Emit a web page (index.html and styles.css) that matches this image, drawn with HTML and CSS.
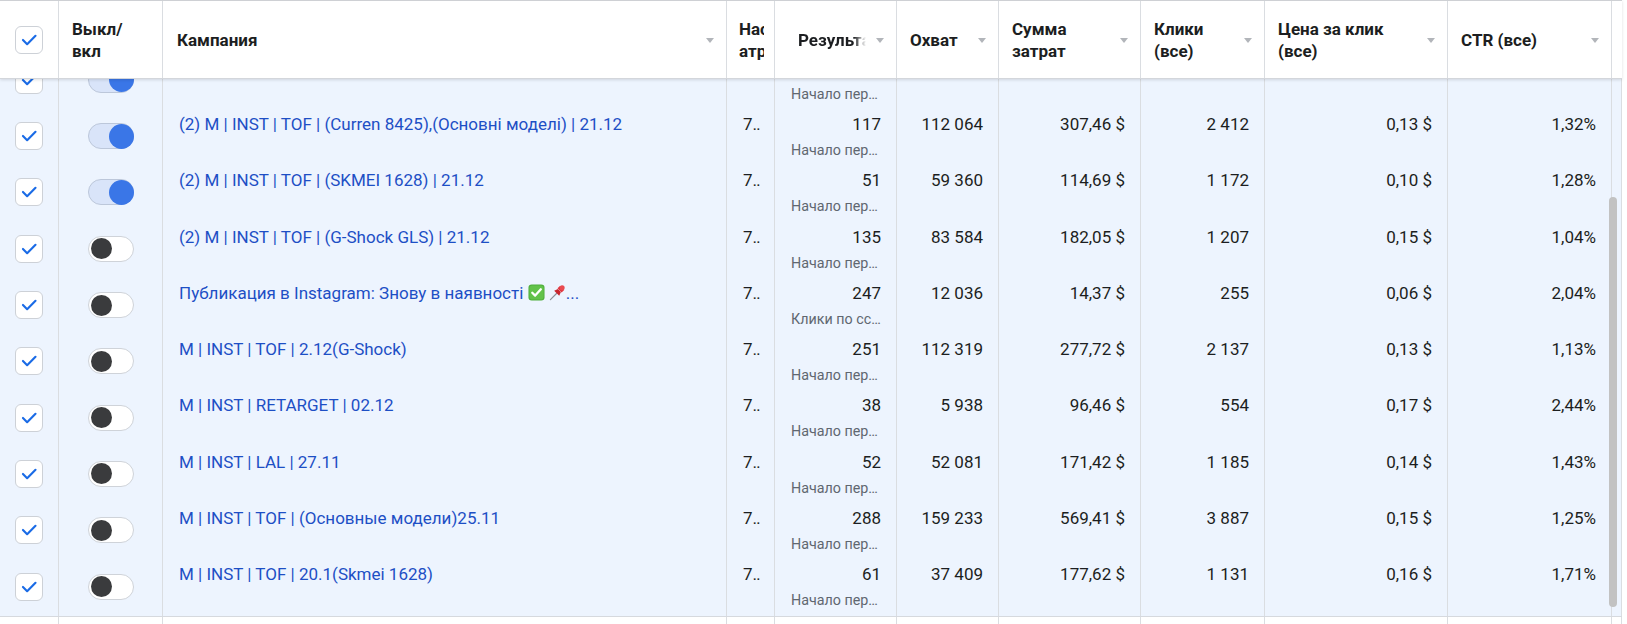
FILE: index.html
```html
<!DOCTYPE html>
<html lang="ru">
<head>
<meta charset="utf-8">
<title>Кампании</title>
<link rel="stylesheet" href="styles.css">
</head>
<body>
<div class="table">
  <div class="cols head">
    <div class="cell hc center"><span class="cb"><svg viewBox="0 0 28 28"><polyline points="7.5,14 12,18.5 21,9.5"/></svg></span></div>
    <div class="cell hc"><span class="ht">Выкл/<br>вкл</span></div>
    <div class="cell hc camp-h"><span class="ht">Кампания</span><span class="arr"></span></div>
    <div class="cell hc attr-h"><span class="ht clip">Настройка атрибуции</span></div>
    <div class="cell hc res-h"><span class="ht nowrap fade">Результаты</span><span class="arr"></span></div>
    <div class="cell hc"><span class="ht">Охват</span><span class="arr"></span></div>
    <div class="cell hc"><span class="ht">Сумма затрат</span><span class="arr"></span></div>
    <div class="cell hc"><span class="ht">Клики (все)</span><span class="arr"></span></div>
    <div class="cell hc"><span class="ht">Цена за клик (все)</span><span class="arr"></span></div>
    <div class="cell hc"><span class="ht">CTR (все)</span><span class="arr"></span></div>
    <div class="cell hc gutter"></div>
  </div>

  <div class="viewport">
    <div class="rows">
      <div class="cols row">
        <div class="cell center"><span class="cb"><svg viewBox="0 0 28 28"><polyline points="7.5,14 12,18.5 21,9.5"/></svg></span></div>
        <div class="cell center"><span class="tg on"><span class="knob"></span></span></div>
        <div class="cell camp"></div>
        <div class="cell attr"></div>
        <div class="cell res"><div class="val">&nbsp;</div><div class="sub">Начало переписки</div></div>
        <div class="cell num"></div>
        <div class="cell num"></div>
        <div class="cell num"></div>
        <div class="cell num"></div>
        <div class="cell num"></div>
        <div class="cell gutter"></div>
      </div>

      <div class="cols row">
        <div class="cell center"><span class="cb"><svg viewBox="0 0 28 28"><polyline points="7.5,14 12,18.5 21,9.5"/></svg></span></div>
        <div class="cell center"><span class="tg on"><span class="knob"></span></span></div>
        <div class="cell camp"><a class="link">(2) M | INST | TOF | (Curren 8425),(Основні моделі) | 21.12</a></div>
        <div class="cell attr"><span class="attr-t">7…</span></div>
        <div class="cell res"><div class="val">117</div><div class="sub">Начало переписки</div></div>
        <div class="cell num">112&nbsp;064</div>
        <div class="cell num">307,46&nbsp;$</div>
        <div class="cell num">2&nbsp;412</div>
        <div class="cell num">0,13&nbsp;$</div>
        <div class="cell num">1,32%</div>
        <div class="cell gutter"></div>
      </div>

      <div class="cols row">
        <div class="cell center"><span class="cb"><svg viewBox="0 0 28 28"><polyline points="7.5,14 12,18.5 21,9.5"/></svg></span></div>
        <div class="cell center"><span class="tg on"><span class="knob"></span></span></div>
        <div class="cell camp"><a class="link">(2) M | INST | TOF | (SKMEI 1628) | 21.12</a></div>
        <div class="cell attr"><span class="attr-t">7…</span></div>
        <div class="cell res"><div class="val">51</div><div class="sub">Начало переписки</div></div>
        <div class="cell num">59&nbsp;360</div>
        <div class="cell num">114,69&nbsp;$</div>
        <div class="cell num">1&nbsp;172</div>
        <div class="cell num">0,10&nbsp;$</div>
        <div class="cell num">1,28%</div>
        <div class="cell gutter"></div>
      </div>

      <div class="cols row">
        <div class="cell center"><span class="cb"><svg viewBox="0 0 28 28"><polyline points="7.5,14 12,18.5 21,9.5"/></svg></span></div>
        <div class="cell center"><span class="tg off"><span class="knob"></span></span></div>
        <div class="cell camp"><a class="link">(2) M | INST | TOF | (G-Shock GLS) | 21.12</a></div>
        <div class="cell attr"><span class="attr-t">7…</span></div>
        <div class="cell res"><div class="val">135</div><div class="sub">Начало переписки</div></div>
        <div class="cell num">83&nbsp;584</div>
        <div class="cell num">182,05&nbsp;$</div>
        <div class="cell num">1&nbsp;207</div>
        <div class="cell num">0,15&nbsp;$</div>
        <div class="cell num">1,04%</div>
        <div class="cell gutter"></div>
      </div>

      <div class="cols row">
        <div class="cell center"><span class="cb"><svg viewBox="0 0 28 28"><polyline points="7.5,14 12,18.5 21,9.5"/></svg></span></div>
        <div class="cell center"><span class="tg off"><span class="knob"></span></span></div>
        <div class="cell camp"><a class="link">Публикация в Instagram: Знову в наявності <svg class="emo" viewBox="0 0 18 18"><rect x="0.5" y="0.5" width="17" height="17" rx="3.5" fill="#4fae3b"/><rect x="1.5" y="1.5" width="15" height="15" rx="3" fill="#62c24a"/><polyline points="4.5,9.2 7.6,12.3 13.6,5.6" fill="none" stroke="#fff" stroke-width="2.4" stroke-linecap="round" stroke-linejoin="round"/></svg> <svg class="emo pin" viewBox="0 0 18 18"><line x1="1.5" y1="16.5" x2="8.5" y2="9.5" stroke="#8c9096" stroke-width="1.3" stroke-linecap="round"/><path d="M5.5 7.2 L10.8 12.5 L12.6 8.6 L9.4 5.4 Z" fill="#c9252c"/><path d="M9 4.6 L13.4 9 L16 6.4 L11.6 2 Z" fill="#e0313a"/><circle cx="13.9" cy="4.1" r="2.7" fill="#e94a50"/></svg>...</a></div>
        <div class="cell attr"><span class="attr-t">7…</span></div>
        <div class="cell res"><div class="val">247</div><div class="sub">Клики по ссылке</div></div>
        <div class="cell num">12&nbsp;036</div>
        <div class="cell num">14,37&nbsp;$</div>
        <div class="cell num">255</div>
        <div class="cell num">0,06&nbsp;$</div>
        <div class="cell num">2,04%</div>
        <div class="cell gutter"></div>
      </div>

      <div class="cols row">
        <div class="cell center"><span class="cb"><svg viewBox="0 0 28 28"><polyline points="7.5,14 12,18.5 21,9.5"/></svg></span></div>
        <div class="cell center"><span class="tg off"><span class="knob"></span></span></div>
        <div class="cell camp"><a class="link">M | INST | TOF | 2.12(G-Shock)</a></div>
        <div class="cell attr"><span class="attr-t">7…</span></div>
        <div class="cell res"><div class="val">251</div><div class="sub">Начало переписки</div></div>
        <div class="cell num">112&nbsp;319</div>
        <div class="cell num">277,72&nbsp;$</div>
        <div class="cell num">2&nbsp;137</div>
        <div class="cell num">0,13&nbsp;$</div>
        <div class="cell num">1,13%</div>
        <div class="cell gutter"></div>
      </div>

      <div class="cols row">
        <div class="cell center"><span class="cb"><svg viewBox="0 0 28 28"><polyline points="7.5,14 12,18.5 21,9.5"/></svg></span></div>
        <div class="cell center"><span class="tg off"><span class="knob"></span></span></div>
        <div class="cell camp"><a class="link">M | INST | RETARGET | 02.12</a></div>
        <div class="cell attr"><span class="attr-t">7…</span></div>
        <div class="cell res"><div class="val">38</div><div class="sub">Начало переписки</div></div>
        <div class="cell num">5&nbsp;938</div>
        <div class="cell num">96,46&nbsp;$</div>
        <div class="cell num">554</div>
        <div class="cell num">0,17&nbsp;$</div>
        <div class="cell num">2,44%</div>
        <div class="cell gutter"></div>
      </div>

      <div class="cols row">
        <div class="cell center"><span class="cb"><svg viewBox="0 0 28 28"><polyline points="7.5,14 12,18.5 21,9.5"/></svg></span></div>
        <div class="cell center"><span class="tg off"><span class="knob"></span></span></div>
        <div class="cell camp"><a class="link">M | INST | LAL | 27.11</a></div>
        <div class="cell attr"><span class="attr-t">7…</span></div>
        <div class="cell res"><div class="val">52</div><div class="sub">Начало переписки</div></div>
        <div class="cell num">52&nbsp;081</div>
        <div class="cell num">171,42&nbsp;$</div>
        <div class="cell num">1&nbsp;185</div>
        <div class="cell num">0,14&nbsp;$</div>
        <div class="cell num">1,43%</div>
        <div class="cell gutter"></div>
      </div>

      <div class="cols row">
        <div class="cell center"><span class="cb"><svg viewBox="0 0 28 28"><polyline points="7.5,14 12,18.5 21,9.5"/></svg></span></div>
        <div class="cell center"><span class="tg off"><span class="knob"></span></span></div>
        <div class="cell camp"><a class="link">M | INST | TOF | (Основные модели)25.11</a></div>
        <div class="cell attr"><span class="attr-t">7…</span></div>
        <div class="cell res"><div class="val">288</div><div class="sub">Начало переписки</div></div>
        <div class="cell num">159&nbsp;233</div>
        <div class="cell num">569,41&nbsp;$</div>
        <div class="cell num">3&nbsp;887</div>
        <div class="cell num">0,15&nbsp;$</div>
        <div class="cell num">1,25%</div>
        <div class="cell gutter"></div>
      </div>

      <div class="cols row">
        <div class="cell center"><span class="cb"><svg viewBox="0 0 28 28"><polyline points="7.5,14 12,18.5 21,9.5"/></svg></span></div>
        <div class="cell center"><span class="tg off"><span class="knob"></span></span></div>
        <div class="cell camp"><a class="link">M | INST | TOF | 20.1(Skmei 1628)</a></div>
        <div class="cell attr"><span class="attr-t">7…</span></div>
        <div class="cell res"><div class="val">61</div><div class="sub">Начало переписки</div></div>
        <div class="cell num">37&nbsp;409</div>
        <div class="cell num">177,62&nbsp;$</div>
        <div class="cell num">1&nbsp;131</div>
        <div class="cell num">0,16&nbsp;$</div>
        <div class="cell num">1,71%</div>
        <div class="cell gutter"></div>
      </div>
    </div>
    <div class="thumb"></div>
  </div>

  <div class="cols foot">
    <div class="cell"></div><div class="cell"></div><div class="cell"></div><div class="cell"></div>
    <div class="cell"></div><div class="cell"></div><div class="cell"></div><div class="cell"></div>
    <div class="cell"></div><div class="cell"></div><div class="cell"></div>
  </div>
</div>
</body>
</html>
```
FILE: styles.css
```css
* { box-sizing: border-box; }

body {
  margin: 0;
  background: #ffffff;
  font-family: Roboto, "Noto Sans", "Liberation Sans", sans-serif;
  font-size: 17px;
  color: #1c1e21;
  overflow: hidden;
}

.table {
  width: 1622px;
  display: flex;
  flex-direction: column;
}

.cols {
  display: grid;
  grid-template-columns: 59px 104px 564px 48px 122px 102px 142px 124px 183px 164px 10px;
}

.cell {
  border-right: 1px solid #dadde1;
  min-width: 0;
}

/* header */
.head {
  height: 79px;
  border-top: 1px solid #ced0d4;
  border-bottom: 1px solid #d3d6db;
  background: #ffffff;
  box-shadow: 0 1px 3px rgba(0, 0, 0, 0.13);
  position: relative;
  z-index: 2;
}

.hc {
  display: flex;
  align-items: center;
  gap: 10px;
  padding: 1px 12px 0 13px;
  font-weight: 700;
  line-height: 22px;
}

.ht {
  flex: 1;
  min-width: 0;
}

.camp-h { padding-left: 14px; }

.attr-h {
  padding: 1px 10px 0 12px;
}

.clip {
  overflow: hidden;
  height: 44px;
  word-break: keep-all;
}

.res-h { padding-left: 23px; }

.nowrap {
  white-space: nowrap;
  overflow: hidden;
}

.fade {
  -webkit-mask-image: linear-gradient(to right, #000 82%, transparent 100%);
  mask-image: linear-gradient(to right, #000 82%, transparent 100%);
}

.arr {
  flex: none;
  width: 0;
  height: 0;
  border-left: 4.5px solid transparent;
  border-right: 4.5px solid transparent;
  border-top: 5px solid #b2b5ba;
  margin-top: 1px;
}

.center {
  display: flex;
  align-items: center;
  justify-content: center;
}

.hc.center { padding: 0; }

/* checkbox */
.cb {
  width: 28px;
  height: 28px;
  border: 1px solid #cdd1d7;
  border-radius: 6px;
  background: #ffffff;
  display: flex;
}

.cb svg {
  width: 26px;
  height: 26px;
}

.cb polyline {
  fill: none;
  stroke: #1a6be6;
  stroke-width: 2.3;
  stroke-linecap: round;
  stroke-linejoin: round;
}

/* body */
.viewport {
  height: 537px;
  overflow: hidden;
  position: relative;
  background: #edf4fe;
}

.rows {
  margin-top: -26.3px;
}

.row {
  height: 56.3px;
  background: #edf4fe;
}

.row .center { padding-bottom: 2px; }

.camp {
  padding: 4px 16px 0 16px;
  line-height: 23px;
  white-space: nowrap;
  overflow: hidden;
}

.link {
  color: #1d4fc5;
  text-decoration: none;
}

.emo {
  width: 17px;
  height: 17px;
  vertical-align: -2px;
}

.attr {
  padding: 4px 0 0 16px;
  line-height: 23px;
}

.attr-t {
  display: block;
  width: 17px;
  white-space: nowrap;
  overflow: hidden;
}

.res {
  padding: 4px 15px 0 16px;
  overflow: hidden;
}

.val {
  text-align: right;
  line-height: 23px;
}

.sub {
  margin-top: 5px;
  font-size: 14.3px;
  line-height: 18px;
  color: #606770;
  white-space: nowrap;
  overflow: hidden;
  text-overflow: ellipsis;
}

.num {
  padding: 4px 15px 0 8px;
  line-height: 23px;
  text-align: right;
  white-space: nowrap;
}

/* toggles */
.tg {
  width: 46px;
  height: 26px;
  border-radius: 13px;
  display: flex;
  align-items: center;
}

.tg.on {
  background: #d9e4f9;
  border: 1px solid #bcc7da;
  justify-content: flex-end;
}

.tg.on .knob {
  width: 25px;
  height: 25px;
  border-radius: 50%;
  background: #3a76e7;
  margin-right: -1px;
}

.tg.off {
  background: #ffffff;
  border: 1px solid #cfd3d9;
  justify-content: flex-start;
  padding-left: 2px;
}

.tg.off .knob {
  width: 21px;
  height: 21px;
  border-radius: 50%;
  background: #3a3b3d;
}

.thumb {
  position: absolute;
  left: 1609px;
  top: 118px;
  width: 8px;
  height: 410px;
  border-radius: 4px;
  background: #c2c2c2;
}

/* footer */
.foot {
  height: 10px;
  border-top: 1px solid #d6d9de;
  background: #ffffff;
}
```
